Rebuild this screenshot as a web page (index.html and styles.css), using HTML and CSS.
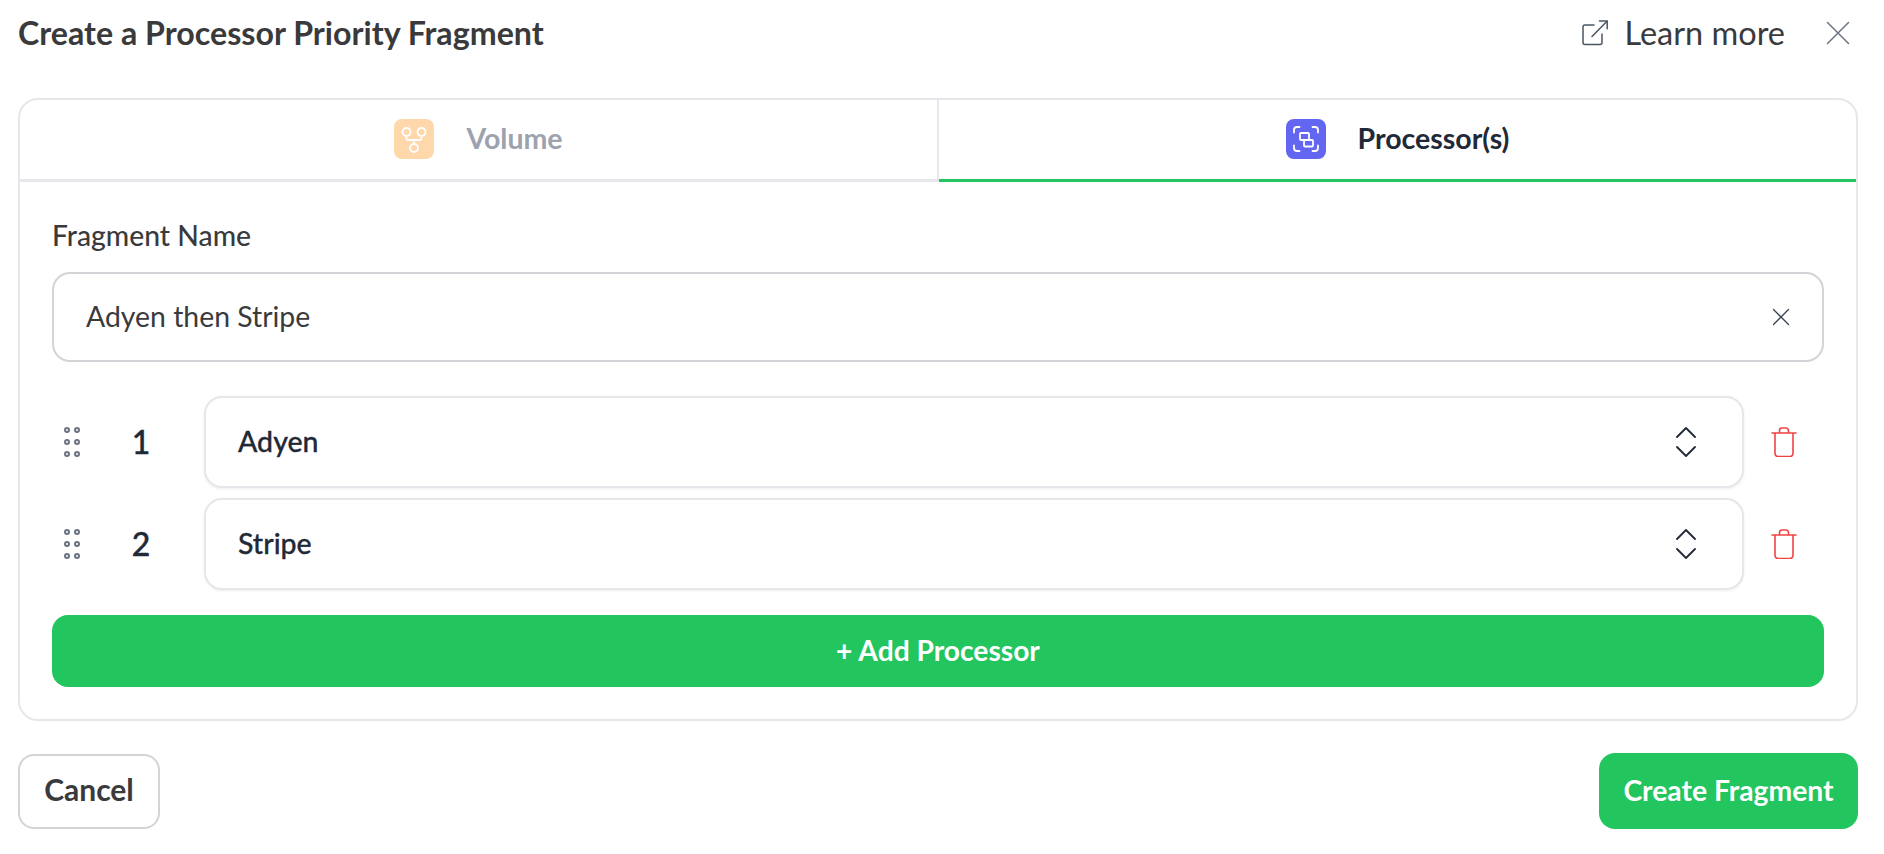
FILE: index.html
```html
<!DOCTYPE html>
<html lang="en">
<head>
<meta charset="utf-8">
<title>Create a Processor Priority Fragment</title>
<link rel="stylesheet" href="styles.css">
</head>
<body>
<div class="dialog">
  <header class="dialog-head">
    <h1 class="title">Create a Processor Priority Fragment</h1>
    <div class="head-actions">
      <a class="learn">
        <svg class="ext-icon" viewBox="0 0 26 26" fill="none" stroke="#4b5563" stroke-width="1.5" stroke-linecap="round" stroke-linejoin="round"><path d="M12 5H3a2 2 0 0 0-2 2v15.500a2 2 0 0 0 2 2h15a2 2 0 0 0 2-2V14"/><path d="M10 16.500 25 1.200"/><path d="M17.500 1h7.700v7.700"/></svg>
        <span>Learn more</span>
      </a>
      <svg class="close-icon" viewBox="0 0 24 24" fill="none" stroke="#6b7280" stroke-width="1.500" stroke-linecap="round"><path d="M1.500 1.500l21 21M22.500 1.500l-21 21"/></svg>
    </div>
  </header>

  <section class="card">
    <div class="tabs">
      <div class="tab">
        <span class="tab-icon orange">
          <svg viewBox="0 0 40 40" fill="none" stroke="#fff" stroke-width="1.800"><circle cx="12.500" cy="13" r="4"/><circle cx="27.500" cy="13" r="4"/><circle cx="20" cy="29" r="4"/><path d="M12.500 17v2.500a1.500 1.500 0 0 0 1.500 1.500h12a1.500 1.500 0 0 0 1.500-1.500V17M20 21v4"/></svg>
        </span>
        <span class="tab-label">Volume</span>
      </div>
      <div class="tab active">
        <span class="tab-icon indigo">
          <svg viewBox="0 0 40 40" fill="none" stroke="#fff" stroke-width="1.800" stroke-linecap="round"><path d="M8 13.500V11a3 3 0 0 1 3-3h2.500M26.500 8H29a3 3 0 0 1 3 3v2.500M32 26.500V29a3 3 0 0 1-3 3h-2.500M13.500 32H11a3 3 0 0 1-3-3v-2.500"/><rect x="14" y="14" width="9" height="7" rx="1"/><rect x="18" y="21" width="9" height="6.500" rx="1"/></svg>
        </span>
        <span class="tab-label">Processor(s)</span>
      </div>
    </div>

    <div class="card-body">
      <label class="field-label">Fragment Name</label>
      <div class="text-input">
        <span class="input-text">Adyen then Stripe</span>
        <svg class="clear-icon" viewBox="0 0 18 18" fill="none" stroke="#374151" stroke-width="1.300" stroke-linecap="round"><path d="M1.500 1.500l15 15M16.500 1.500l-15 15"/></svg>
      </div>

      <div class="rows">
        <div class="row">
          <svg class="drag" viewBox="0 0 16 30" fill="none" stroke="#6b7280" stroke-width="2"><circle cx="3" cy="3" r="2"/><circle cx="13" cy="3" r="2"/><circle cx="3" cy="15" r="2"/><circle cx="13" cy="15" r="2"/><circle cx="3" cy="27" r="2"/><circle cx="13" cy="27" r="2"/></svg>
          <span class="num">1</span>
          <div class="select">
            <span class="input-text">Adyen</span>
            <svg class="updown" viewBox="0 0 20 30" fill="none" stroke="#1f2937" stroke-width="1.800" stroke-linecap="round" stroke-linejoin="round"><path d="M1 10l9-9 9 9M1 20l9 9 9-9"/></svg>
          </div>
          <svg class="trash" viewBox="0 0 26 30" fill="none" stroke="#ef4444" stroke-width="1.600" stroke-linecap="round" stroke-linejoin="round"><path d="M1 6h24M4 6v20.500a3 3 0 0 0 3 3h12a3 3 0 0 0 3-3V6M8.500 6V3.500a2.500 2.500 0 0 1 2.500-2.500h4a2.500 2.500 0 0 1 2.500 2.500V6"/></svg>
        </div>
        <div class="row">
          <svg class="drag" viewBox="0 0 16 30" fill="none" stroke="#6b7280" stroke-width="2"><circle cx="3" cy="3" r="2"/><circle cx="13" cy="3" r="2"/><circle cx="3" cy="15" r="2"/><circle cx="13" cy="15" r="2"/><circle cx="3" cy="27" r="2"/><circle cx="13" cy="27" r="2"/></svg>
          <span class="num">2</span>
          <div class="select">
            <span class="input-text">Stripe</span>
            <svg class="updown" viewBox="0 0 20 30" fill="none" stroke="#1f2937" stroke-width="1.800" stroke-linecap="round" stroke-linejoin="round"><path d="M1 10l9-9 9 9M1 20l9 9 9-9"/></svg>
          </div>
          <svg class="trash" viewBox="0 0 26 30" fill="none" stroke="#ef4444" stroke-width="1.600" stroke-linecap="round" stroke-linejoin="round"><path d="M1 6h24M4 6v20.500a3 3 0 0 0 3 3h12a3 3 0 0 0 3-3V6M8.500 6V3.500a2.500 2.500 0 0 1 2.500-2.500h4a2.500 2.500 0 0 1 2.500 2.500V6"/></svg>
        </div>
      </div>

      <button class="add-btn">+ Add Processor</button>
    </div>
  </section>

  <footer class="dialog-foot">
    <button class="btn-cancel">Cancel</button>
    <button class="btn-create">Create Fragment</button>
  </footer>
</div>
</body>
</html>
```
FILE: styles.css
```css
* { box-sizing: border-box; }
html, body { margin: 0; padding: 0; background: #fff; }
body { font-family: "Lato", "Liberation Sans", sans-serif; color: #1f2937; }

.dialog { width: 1884px; padding: 0 26px 0 18px; }

.dialog-head { height: 66px; margin-bottom: 32px; display: flex; align-items: center; justify-content: space-between; }
.title { margin: 0; padding-bottom: 2px; font-size: 32.200px; font-weight: 700; color: #3a3a3c; }
.head-actions { display: flex; align-items: center; padding-right: 8px; }
.learn { display: flex; align-items: center; gap: 16px; font-size: 32.500px; color: #3a3a3c; }
.learn span { padding-bottom: 2px; }
.ext-icon { width: 26px; height: 26px; }
.close-icon { width: 24px; height: 24px; margin-left: 41px; }

.card { border: 2px solid #e5e7eb; border-radius: 20px; }
.tabs { display: flex; height: 82px; border-bottom: 3px solid #e5e7eb; }
.tab { flex: 1; display: flex; align-items: center; justify-content: center; gap: 32px; margin-bottom: -3px; padding-bottom: 4px; font-size: 28.500px; font-weight: 700; color: #9ca3af; }
.tab:first-child { border-right: 2px solid #e5e7eb; }
.tab.active { color: #1f2937; border-bottom: 3px solid #22c55e; padding-bottom: 1px; }
.tab-label { padding-bottom: 2px; }
.tab-icon { width: 40px; height: 40px; border-radius: 8px; display: block; }
.tab-icon svg { display: block; width: 40px; height: 40px; }
.tab-icon.orange { background: #fed7aa; }
.tab-icon.indigo { background: #6366f1; }

.card-body { padding: 38px 32px 32px; }
.field-label { display: block; line-height: 30px; font-size: 28.300px; font-weight: 500; color: #3a3a3c; margin-bottom: 22px; }
.text-input { height: 90px; border: 2px solid #d4d4d8; border-radius: 18px; padding: 0 32px; display: flex; align-items: center; justify-content: space-between; font-size: 28.400px; color: #3a3a3c; }
.input-text { padding-bottom: 2px; }
.clear-icon { width: 18px; height: 18px; }

.rows { margin-top: 34px; display: flex; flex-direction: column; gap: 10px; }
.row { display: grid; grid-template-columns: 40px 98px 1fr 80px; align-items: center; }
.drag { width: 16px; height: 30px; justify-self: center; }
.num { text-align: center; font-size: 32px; font-weight: 500; color: #1f2937; padding-bottom: 2px; -webkit-text-stroke: .4px #1f2937; }
.select { margin-left: 14px; height: 92px; border: 2px solid #e5e7eb; border-radius: 18px; padding: 0 46px 0 32px; display: flex; align-items: center; justify-content: space-between; font-size: 28.500px; font-weight: 500; color: #1f2937; -webkit-text-stroke: .3px #1f2937; box-shadow: 0 1px 3px rgba(0,0,0,.07); background: #fff; }
.updown { width: 20px; height: 30px; }
.trash { width: 26px; height: 30px; justify-self: center; }

.add-btn { display: block; width: 100%; height: 72px; margin-top: 25px; padding: 0 0 2px; border: 0; border-radius: 16px; background: #22c55e; color: #fff; font: 700 28.200px "Lato", "Liberation Sans", sans-serif; }

.dialog-foot { margin-top: 32px; display: flex; align-items: center; justify-content: space-between; }
.btn-cancel { width: 142px; height: 75px; padding: 0 0 4px; background: #fff; border: 2px solid #d4d4d8; border-radius: 16px; color: #3a3a3c; font: 700 30px "Lato", "Liberation Sans", sans-serif; }
.btn-create { width: 259px; height: 76px; padding: 0 0 2px; background: #22c55e; border: 0; border-radius: 16px; color: #fff; font: 700 28.300px "Lato", "Liberation Sans", sans-serif; }
```
